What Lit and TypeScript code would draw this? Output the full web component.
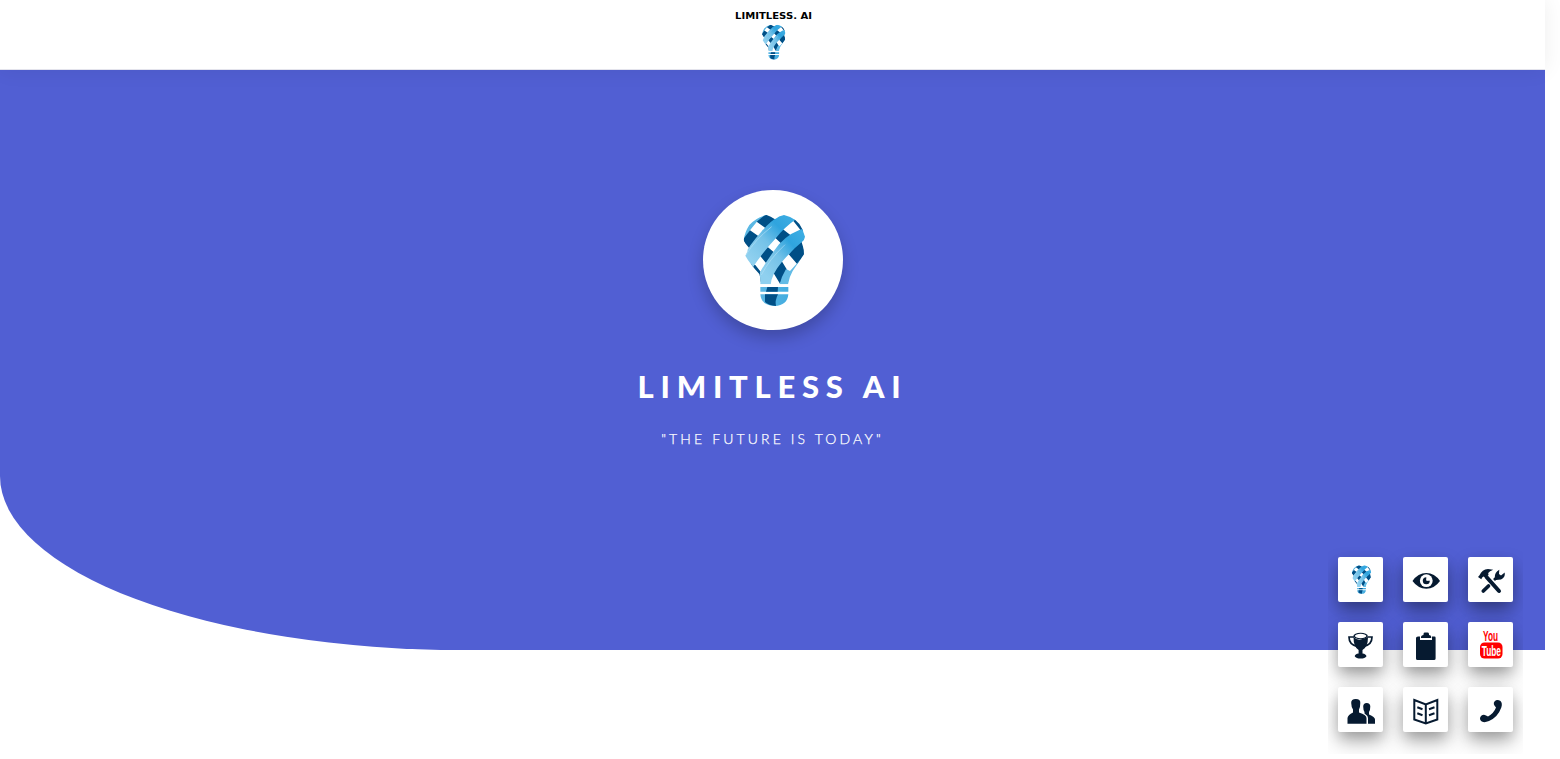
import { LitElement, html, svg, css } from "lit";
import { customElement, property } from "lit/decorators.js";

const bulb = () => svg`
  <defs>
    <linearGradient id="ribbon" x1="0" y1="1" x2="1" y2="0">
      <stop offset="0.15" stop-color="#8fd0ef"/><stop offset="0.45" stop-color="#74c2e8"/><stop offset="0.7" stop-color="#2fa4de"/><stop offset="1" stop-color="#42b0e4"/>
    </linearGradient>
    <linearGradient id="base" x1="0" y1="0" x2="1" y2="0">
      <stop offset="0" stop-color="#5bb5e2"/><stop offset="1" stop-color="#43ade0"/>
    </linearGradient>
    <clipPath id="shell"><path d="M110 30Q122 34 135 43Q146 33 162 30Q205 40 217 73L225 95L220 110L222 148L188 198Q177 217 174 238H91Q92 216 88 207Q58 174 46 152L53 138L41 105Q44 82 58 60Q80 36 110 30Z"/></clipPath>
  </defs>
  <g clip-path="url(#shell)">
    <path d="M38 108Q42 70 64 45L112 26L110 36L80 51L60 76L44 104Z" fill="#5bb8e4"/>
    <path d="M80 50L110 26L140 42L109 71ZM38 105L60 76L88 95L58 130ZM133 96L155 70L184 92L156 118ZM88 150L113 126L138 147L108 174ZM62 176L76 180L92 200V232ZM122 190L150 160L172 196L150 236ZM176 148L212 102L226 148L202 178ZM190 48L202 36L228 82L212 76Z" fill="#004f86"/>
    <path d="M42 154Q56 122 94 80Q124 44 162 24L202 40Q164 66 138 99Q98 142 68 188Z" fill="url(#ribbon)"/>
    <path d="M90 240V202Q112 163 147 118Q182 80 224 70L230 99Q184 136 155 172Q124 209 122 240Z" fill="url(#ribbon)"/>
    <path d="M148 241Q154 215 168 192L180 198L202 174L226 148L188 204L175 241Z" fill="#63bce6"/>
    <path d="M48 150Q75 104 125 65M94 210Q118 163 165 119" stroke="#b0e0f6" stroke-width="2" fill="none"/>
  </g>
  <path d="M91 246H175V260H91ZM91 268H175Q172 302 134 303Q94 302 91 268Z" fill="url(#base)"/>
  <path d="M112 246H144L143 260H108ZM105 268H144Q134 288 138 303Q116 301 105 291Z" fill="#004f86"/>
`;

const icons: Record<string, () => unknown> = {
  bulb: () => svg`<svg x="11.500" y="7.500" width="24" height="30" viewBox="33 23 200 286">${bulb()}</svg>`,
  eye: () => svg`<path d="M9.5 24Q15 16 23.3 16T37 24Q31.500 31.700 23.300 31.700T9.500 24Z"/><circle cx="23.300" cy="23.700" r="6.400" fill="#fff"/><circle cx="23.300" cy="23.700" r="3.500"/><path d="M23.300 23.700V19.500H27.500V23.700Z" fill="#fff"/><circle cx="24.800" cy="22.200" r="1.200" fill="#fff"/>`,
  tools: () => svg`<path d="M10 20L11.500 18.300Q14 12.300 20 12L25.200 12.800Q21.500 14 20.200 16L20.500 18L17.500 20.500L15.500 19.500Q14 20 13.300 22.300Z"/><path d="M18.500 20L31 34" stroke="#061a30" stroke-width="4" stroke-linecap="round"/><path d="M15.300 34L20.500 29" stroke="#061a30" stroke-width="3.700" stroke-linecap="round"/><path d="M26 23L29.500 19.700" stroke="#061a30" stroke-width="2.800"/><path d="M26.800 20.500Q26.500 15.500 31.300 12.800L31 17L33 18.500L36.700 15.500Q37.500 20.500 33 22.500L28 23Z"/>`,
  trophy: () => svg`<ellipse cx="22.600" cy="14" rx="7.200" ry="3.200"/><ellipse cx="22.600" cy="14" rx="5.700" ry="2.200" fill="#fff"/><path d="M15.500 15Q19 18.300 22.600 17.600T30 15Q30 25 24.500 28V31.500Q28 32 28.500 34.200Q27 36.500 22.600 36.500T16.700 34.200Q17 32 20.600 31.500V28Q15.500 25 15.500 15Z"/><path d="M16 15H11Q11 22.500 19 24.300M29.500 15H34Q34 22.500 26 24.300" fill="none" stroke="#061a30" stroke-width="1.700"/>`,
  clipboard: () => svg`<path d="M15 14.500H17V17.900H29V14.500H31.500Q32.600 14.500 32.600 15.700V36.500Q32.600 38 31 38H14.500Q13 38 13 36.500V16Q13 14.500 15 14.500Z"/><path d="M18 16V14.800Q18.500 13.300 20.500 13V12Q20.600 10.600 22 10.600H24.500Q25.800 10.600 26 12V13Q28 13.300 28.200 14.800V16Z"/>`,
  youtube: () => svg`<rect x="12" y="20.500" width="22.500" height="16" rx="4.500" fill="#f00"/><text x="15" y="19" textLength="15" lengthAdjust="spacingAndGlyphs" class="you">You</text><text x="13.700" y="33.800" textLength="19.300" lengthAdjust="spacingAndGlyphs" class="tube">Tube</text>`,
  people: () => svg`<path d="M13.200 16Q13 12 17.800 12T22.300 16Q22.300 20 21 22.500V25.500Q28.500 27.800 28.500 31V36.700H9.500V31Q10 27.700 15 25.500V22.500Q13.300 20 13.200 16Z"/><path d="M25.200 19.500Q25.200 16 28.700 16T32.300 19.500Q32.300 23 31 25V27.500Q37 30 37 32.500V36.700H30V31Q29.700 28.500 26.500 26.500V25Q25.200 23 25.200 19.500Z"/>`,
  book: () => svg`<path d="M11.300 13L22.800 17.500L34.300 13V32.500L22.800 36.500L11.300 32.500ZM22.800 17.500V36.500M14.300 20.200L19.500 22.200M14.300 26.200L19.500 28.200M31.500 20.200L26 22.200M31.500 26.200L26 28.200" fill="none" stroke="#061a30" stroke-width="2"/>`,
  phone: () => svg`<path d="M12.300 30Q14.500 26.700 18 28.500L20 29.500Q26 26 28 20.500Q24.500 17 26.500 14.500Q29 12 32.500 14Q34.700 16 33.300 20.500Q30 30 21 34Q15.500 36.300 13 34Q11.300 32 12.300 30Z"/>`,
};

@customElement("menu-tile")
class MenuTile extends LitElement {
  @property() icon = "bulb";
  static styles = css`
    :host { display: block; width: 45px; height: 45px; border-radius: 2px; background: #fff; box-shadow: 0 10px 20px rgba(0,0,0,.26), 0 6px 14px -2px rgba(0,0,0,.22); }
    svg { display: block; overflow: visible; }
    text { font-family: "Liberation Sans", sans-serif; font-weight: 700; }
    .you { font-size: 15.500px; fill: #f00; }
    .tube { font-size: 15px; fill: #fff; }
  `;
  render() {
    return html`<svg width="45" height="45" viewBox="0 0 45 45" fill="#061a30">${icons[this.icon]()}</svg>`;
  }
}

@customElement("app-root")
class AppRoot extends LitElement {
  static styles = css`
    :host { display: block; width: 1560px; height: 759px; position: relative; overflow: hidden; background: #fff; font-family: Lato, sans-serif; }
    header { position: relative; width: 1545px; height: 70px; box-sizing: border-box; background: #fff; border-bottom: 1px solid #e3e3ec; box-shadow: 0 0 20px rgba(0,0,0,.07); display: flex; justify-content: center; }
    header svg { display: block; }
    .brand { font: 700 8.500px "DejaVu Sans", sans-serif; fill: #000; }
    .hero { width: 1545px; height: 580px; box-sizing: border-box; padding-top: 120px; background: #515fd3; border-bottom-left-radius: 30% 30%; display: flex; flex-direction: column; align-items: center; color: #fff; }
    .medal { width: 140px; height: 140px; border-radius: 50%; background: #fff; box-shadow: 0 8px 16px rgba(0,0,0,.22); }
    .medal svg { display: block; margin: 15px 0 0 27px; }
    h1 { margin: 36px 0 0; font: 900 31px/40px Lato, sans-serif; letter-spacing: 6.750px; white-space: nowrap; }
    p { margin: 23px 0 0; font-size: 14px; font-weight: 300; line-height: 20px; letter-spacing: 3.120px; white-space: nowrap; -webkit-text-stroke: .25px #fff; }
    nav { position: absolute; left: 1328px; top: 547px; width: 195px; height: 207px; box-sizing: border-box; padding: 10px; overflow: hidden; display: grid; grid-template-columns: repeat(3, 45px); grid-auto-rows: 45px; gap: 20px; }
  `;
  render() {
    return html`
      <header>
        <svg width="90" height="69" viewBox="0 0 90 69">
          <text class="brand" x="7" y="19" textLength="77" lengthAdjust="spacingAndGlyphs">LIMITLESS. AI</text>
          <svg x="33" y="23" width="25.500" height="38" viewBox="33 23 200 286">${bulb()}</svg>
        </svg>
      </header>
      <section class="hero">
        <div class="medal"><svg width="90" height="110" viewBox="0 0 270 330">${bulb()}</svg></div>
        <h1>LIMITLESS AI</h1>
        <p>"THE FUTURE IS TODAY"</p>
      </section>
      <nav>${Object.keys(icons).map((icon) => html`<menu-tile .icon=${icon}></menu-tile>`)}</nav>
    `;
  }
}
